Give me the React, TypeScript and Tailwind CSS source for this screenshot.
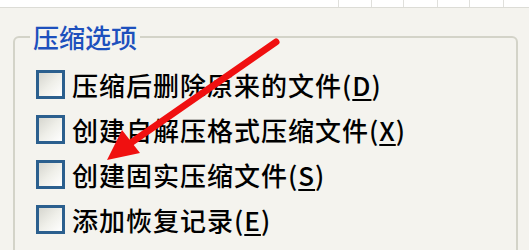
const options = [
  { label: "压缩后删除原来的文件", key: "D" },
  { label: "创建自解压格式压缩文件", key: "X" },
  { label: "创建固实压缩文件", key: "S" },
  { label: "添加恢复记录", key: "E" },
];

const Checkbox = () => (
  <span className="block w-[29px] h-[29px] shrink-0 border-[3px] border-[#2b5f8e] bg-gradient-to-br from-[#d6d6cf] via-[#efefe9] to-white"></span>
);

export default function App() {
  return (
    <div
      className="relative w-[529px] h-[250px] overflow-hidden bg-[#f4f3ee]"
      style={{ fontFamily: '"Noto Sans CJK SC", "Noto Sans", sans-serif' }}
    >
      {/* top table strip */}
      <div className="flex h-[8px] bg-white border-b border-[#dcdcd6]">
        <div className="w-[338px]"></div>
        <div className="w-[33px] border-l border-[#e0e0dc]"></div>
        <div className="w-[32px] border-l border-[#e0e0dc]"></div>
        <div className="w-[34px] border-l border-[#e0e0dc]"></div>
        <div className="w-[32px] border-l border-[#e0e0dc]"></div>
        <div className="w-[34px] border-l border-[#e0e0dc]"></div>
        <div className="flex-1 border-l border-[#e0e0dc]"></div>
      </div>

      {/* group box */}
      <fieldset className="ml-[13px] mr-[11px] mt-[14px] h-[260px] border-2 border-[#d3d3c8] rounded-[6px]">
        <legend className="ml-[15px] px-[3px] text-[26px] leading-[30px] font-medium text-[#1d50bd]">
          压缩选项
        </legend>
        <div className="flex flex-col gap-[16px] pl-[21px] pt-[18px]">
          {options.map((o) => (
            <label key={o.key} className="flex items-center gap-[7px] h-[29px]">
              <Checkbox />
              <span className="text-[26px] leading-none tracking-[1px] font-medium text-black whitespace-nowrap">
                {o.label}(<span className="underline underline-offset-[3px]">{o.key}</span>)
              </span>
            </label>
          ))}
        </div>
      </fieldset>

      {/* red arrow annotation */}
      <svg className="absolute left-0 top-0" width="529" height="250" viewBox="0 0 529 250">
        <line x1="276" y1="42" x2="122" y2="149" stroke="#f01010" strokeWidth="7" strokeLinecap="round" />
        <polygon points="107,160 122,130 140,153" fill="#f01010" />
      </svg>
    </div>
  );
}
